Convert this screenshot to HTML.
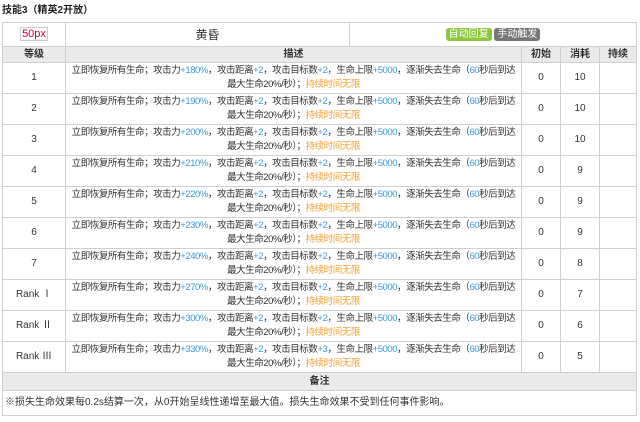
<!DOCTYPE html>
<html><head><meta charset="utf-8"><style>
body{margin:0;width:640px;height:422px;background:#fff;font-family:"Liberation Sans","Noto Sans CJK SC",sans-serif;color:#333;overflow:hidden;position:relative}
.t{position:absolute;left:2px;top:1px;font-size:10px;font-weight:bold;color:#222}
table{position:absolute;left:2px;top:22px;width:634px;border-collapse:collapse;table-layout:fixed;font-size:10px}
td,th{border:1px solid #cfcfcf;text-align:center;padding:0;line-height:14px;white-space:nowrap;overflow:hidden}
th{background:#eaeaea;font-weight:bold;height:15px}
tr.d td{height:30px}
tr.d td.x{font-size:9.5px;letter-spacing:-0.45px}
.b{color:#3a9ad9}.o{color:#f0a030}
.tag{display:inline-block;padding:0 3px;border-radius:3px;color:#fff;font-size:10px;line-height:13px}
</style></head><body>
<div class="t">技能3（精英2开放）</div>
<table>
<colgroup><col style="width:63px"><col style="width:284px"><col style="width:172px"><col style="width:39px"><col style="width:39px"><col style="width:37px"></colgroup>
<tr style="height:24px"><td><span style="color:#c03;border:1px solid #ccc;padding:0 1px;font-size:11px">50px</span></td><td style="font-size:12px">黄昏</td><td colspan="4"><span class="tag" style="background:#8cc63f">自动回复</span> <span class="tag" style="background:#777">手动触发</span></td></tr>
<tr><th>等级</th><th colspan="2">描述</th><th>初始</th><th>消耗</th><th>持续</th></tr>
<tr class="d"><td>1</td><td colspan="2" class="x">立即恢复所有生命；攻击力<span class="b">+180%</span>，攻击距离<span class="b">+2</span>，攻击目标数<span class="b">+2</span>，生命上限<span class="b">+5000</span>，逐渐失去生命（<span class="b">60</span>秒后到达<br>最大生命20%/秒）；<span class="o">持续时间无限</span></td><td>0</td><td>10</td><td></td></tr>
<tr class="d"><td>2</td><td colspan="2" class="x">立即恢复所有生命；攻击力<span class="b">+190%</span>，攻击距离<span class="b">+2</span>，攻击目标数<span class="b">+2</span>，生命上限<span class="b">+5000</span>，逐渐失去生命（<span class="b">60</span>秒后到达<br>最大生命20%/秒）；<span class="o">持续时间无限</span></td><td>0</td><td>10</td><td></td></tr>
<tr class="d"><td>3</td><td colspan="2" class="x">立即恢复所有生命；攻击力<span class="b">+200%</span>，攻击距离<span class="b">+2</span>，攻击目标数<span class="b">+2</span>，生命上限<span class="b">+5000</span>，逐渐失去生命（<span class="b">60</span>秒后到达<br>最大生命20%/秒）；<span class="o">持续时间无限</span></td><td>0</td><td>10</td><td></td></tr>
<tr class="d"><td>4</td><td colspan="2" class="x">立即恢复所有生命；攻击力<span class="b">+210%</span>，攻击距离<span class="b">+2</span>，攻击目标数<span class="b">+2</span>，生命上限<span class="b">+5000</span>，逐渐失去生命（<span class="b">60</span>秒后到达<br>最大生命20%/秒）；<span class="o">持续时间无限</span></td><td>0</td><td>9</td><td></td></tr>
<tr class="d"><td>5</td><td colspan="2" class="x">立即恢复所有生命；攻击力<span class="b">+220%</span>，攻击距离<span class="b">+2</span>，攻击目标数<span class="b">+2</span>，生命上限<span class="b">+5000</span>，逐渐失去生命（<span class="b">60</span>秒后到达<br>最大生命20%/秒）；<span class="o">持续时间无限</span></td><td>0</td><td>9</td><td></td></tr>
<tr class="d"><td>6</td><td colspan="2" class="x">立即恢复所有生命；攻击力<span class="b">+230%</span>，攻击距离<span class="b">+2</span>，攻击目标数<span class="b">+2</span>，生命上限<span class="b">+5000</span>，逐渐失去生命（<span class="b">60</span>秒后到达<br>最大生命20%/秒）；<span class="o">持续时间无限</span></td><td>0</td><td>9</td><td></td></tr>
<tr class="d"><td>7</td><td colspan="2" class="x">立即恢复所有生命；攻击力<span class="b">+240%</span>，攻击距离<span class="b">+2</span>，攻击目标数<span class="b">+2</span>，生命上限<span class="b">+5000</span>，逐渐失去生命（<span class="b">60</span>秒后到达<br>最大生命20%/秒）；<span class="o">持续时间无限</span></td><td>0</td><td>8</td><td></td></tr>
<tr class="d"><td>Rank Ⅰ</td><td colspan="2" class="x">立即恢复所有生命；攻击力<span class="b">+270%</span>，攻击距离<span class="b">+2</span>，攻击目标数<span class="b">+2</span>，生命上限<span class="b">+5000</span>，逐渐失去生命（<span class="b">60</span>秒后到达<br>最大生命20%/秒）；<span class="o">持续时间无限</span></td><td>0</td><td>7</td><td></td></tr>
<tr class="d"><td>Rank Ⅱ</td><td colspan="2" class="x">立即恢复所有生命；攻击力<span class="b">+300%</span>，攻击距离<span class="b">+2</span>，攻击目标数<span class="b">+2</span>，生命上限<span class="b">+5000</span>，逐渐失去生命（<span class="b">60</span>秒后到达<br>最大生命20%/秒）；<span class="o">持续时间无限</span></td><td>0</td><td>6</td><td></td></tr>
<tr class="d"><td>Rank Ⅲ</td><td colspan="2" class="x">立即恢复所有生命；攻击力<span class="b">+330%</span>，攻击距离<span class="b">+2</span>，攻击目标数<span class="b">+3</span>，生命上限<span class="b">+5000</span>，逐渐失去生命（<span class="b">60</span>秒后到达<br>最大生命20%/秒）；<span class="o">持续时间无限</span></td><td>0</td><td>5</td><td></td></tr>
<tr><th colspan="6" style="height:17px">备注</th></tr>
<tr><td colspan="6" style="text-align:left;height:24px;padding-left:2px">※损失生命效果每0.2s结算一次，从0开始呈线性递增至最大值。损失生命效果不受到任何事件影响。</td></tr>
</table>
</body></html>
